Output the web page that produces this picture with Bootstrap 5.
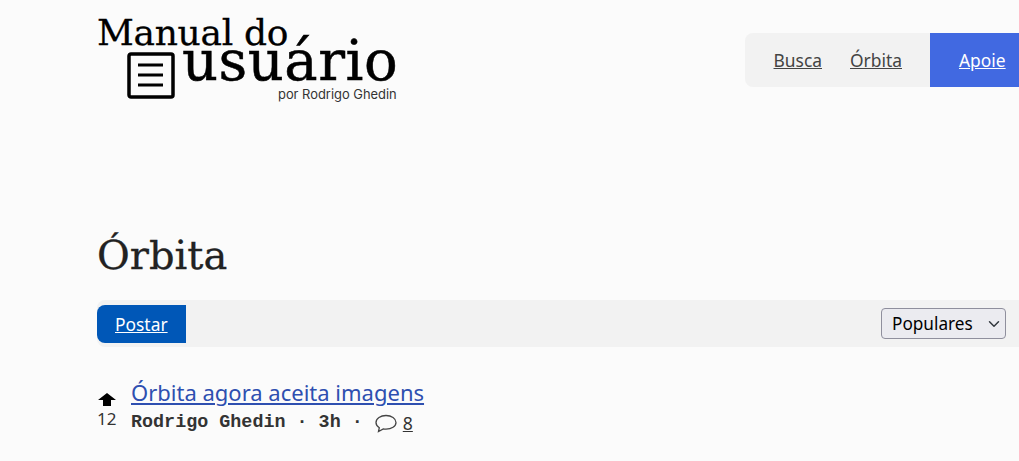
<!DOCTYPE html>
<html lang="pt-BR">
<head>
    <meta charset="UTF-8">
    <meta name="viewport" content="width=device-width, initial-scale=1.0">
    <title>Órbita</title>
    <link href="https://cdn.jsdelivr.net/npm/bootstrap@5.3.3/dist/css/bootstrap.min.css" rel="stylesheet">
    <style>
        html, body { height: 461px; overflow: hidden; }
        body { background: #fbfbfb; color: #222; font-family: "Noto Sans", sans-serif; }
        .page-wrap { margin-left: 97px; width: 922px; }
        .site-head { height: 87px; }
        .logo-box { width: 302px; color: #000; padding-top: 15px; }
        .logo-line1 { font-family: "DejaVu Serif", serif; font-size: 36px; line-height: 36px; letter-spacing: -0.3px; display: block; -webkit-text-stroke: 0.3px #000; }
        .logo-row { margin-top: -11px; height: 50px; }
        .logo-icon { margin: 12px 7px 0 30px; flex: none; }
        .logo-line2 { font-family: "DejaVu Serif", serif; font-size: 56px; line-height: 42px; letter-spacing: 0.5px; -webkit-text-stroke: 0.5px #000; }
        .logo-by { font-family: Inter, sans-serif; font-size: 12.9px; line-height: 14px; display: block; margin: -2px 0 0 181px; color: #333; white-space: nowrap; }
        .top-menu { height: 54px; margin-top: 33px; background: #f2f2f2; border-radius: 8px 0 0 8px; }
        .top-menu a { color: #444; font-size: 17.4px; }
        .top-menu .menu-link { padding: 0 14px; }
        .top-menu .menu-first { padding-left: 29px; }
        .top-menu .menu-apoie { background: #4169e1; color: #fff; height: 54px; width: 89px; margin-left: 14px; padding-left: 29px; display: flex; align-items: center; }
        .page-title { font-family: "DejaVu Serif", serif; font-weight: 400; font-size: 40px; line-height: 1; margin: 148px 0 0; color: #222; -webkit-text-stroke: 0.3px #222; }
        .post-bar { background: #f2f2f2; height: 47px; margin-top: 25px; border-radius: 8px 0 0 8px; }
        .post-btn { background: #0057b7; color: #fff; width: 89px; height: 38px; margin-top: 5px; padding-left: 18px; font-size: 17.4px; border-radius: 8px 0 0 8px; display: flex; align-items: center; }
        .sort-select { width: 125px; height: 31px; margin-right: 13px; padding: 0 0 0 10px; font-size: 17.2px; font-family: "Noto Sans", sans-serif; color: #000; background-color: #ebebf0; border: 1px solid #8f8f9d; border-radius: 4px; background-size: 16px 12px; background-position: right 3px center; }
        .post-item { margin-top: 30px; }
        .vote-col { width: 34px; }
        .vote-count { font-size: 17px; line-height: 20px; color: #333; margin-top: 3px; }
        .vote-arrow { display: block; margin: 16px 0 0 1px; }
        .post-link { color: #2e4fb0; font-size: 22px; line-height: 30px; }
        .post-meta { font-family: "Liberation Mono", monospace; font-weight: 700; font-size: 18.4px; line-height: 20px; color: #333; margin-top: 6px; }
        .post-meta a { color: #333; font-family: "Noto Sans", sans-serif; font-weight: 400; font-size: 17.6px; }
        .post-bubble { margin-left: 11px; margin-right: 5px; }
        .post-item-next { margin-top: 20px; }
    </style>
</head>

<body>
    <div class="page-wrap">
        <header class="site-head d-flex justify-content-between align-items-start">
            <a class="logo-box d-block text-decoration-none" href="#">
                <span class="logo-line1">Manual do</span>
                <span class="logo-row d-flex">
                    <svg class="logo-icon" width="48" height="47" viewBox="0 0 48 47" fill="none" stroke="#000">
                        <rect x="2" y="2" width="44" height="43" rx="2" stroke-width="3.5"/>
                        <path d="M11 13H36M11 23H36M11 33H36" stroke-width="3.2"/>
                    </svg>
                    <span class="logo-line2">usuário</span>
                </span>
                <span class="logo-by">por Rodrigo Ghedin</span>
            </a>
            <nav class="top-menu d-flex align-items-center">
                <a class="menu-link menu-first" href="#">Busca</a>
                <a class="menu-link" href="#">Órbita</a>
                <a class="menu-apoie" href="#">Apoie</a>
            </nav>
        </header>

        <h1 class="page-title">Órbita</h1>

        <div class="post-bar d-flex justify-content-between align-items-center">
            <a class="post-btn align-self-start" href="#">Postar</a>
            <select class="form-select sort-select">
                <option>Populares</option>
            </select>
        </div>

        <div class="post-item d-flex">
            <div class="vote-col">
                <svg class="vote-arrow" width="18" height="13" viewBox="0 0 18 13"><path d="M9 0L18 7H13V13H5V7H0Z" fill="#000"/></svg>
                <div class="vote-count">12</div>
            </div>
            <div>
                <a class="post-link" href="#">Órbita agora aceita imagens</a>
                <div class="post-meta d-flex align-items-center">Rodrigo Ghedin · 3h ·
                    <svg class="post-bubble" width="24" height="19" viewBox="0 0 23 19" fill="none" stroke="#444" stroke-width="1.3"><path d="M11.5 1.5C6 1.5 1.5 4.4 1.5 8.5c0 2.2 1.3 4 3.3 5.2L4 17.5l4.8-2.6c.9.2 1.8.2 2.7.2 5.5 0 10-2.7 10-6.6s-4.5-7-10-7z"/></svg>
                    <a href="#">8</a>
                </div>
            </div>
        </div>

        <div class="post-item-next d-flex">
            <div class="vote-col"></div>
            <a class="post-link" href="#">Qual sua empresa hoje e a melhor?</a>
        </div>
    </div>

    <script src="https://cdn.jsdelivr.net/npm/bootstrap@5.3.3/dist/js/bootstrap.bundle.min.js"></script>
</body>
</html>
